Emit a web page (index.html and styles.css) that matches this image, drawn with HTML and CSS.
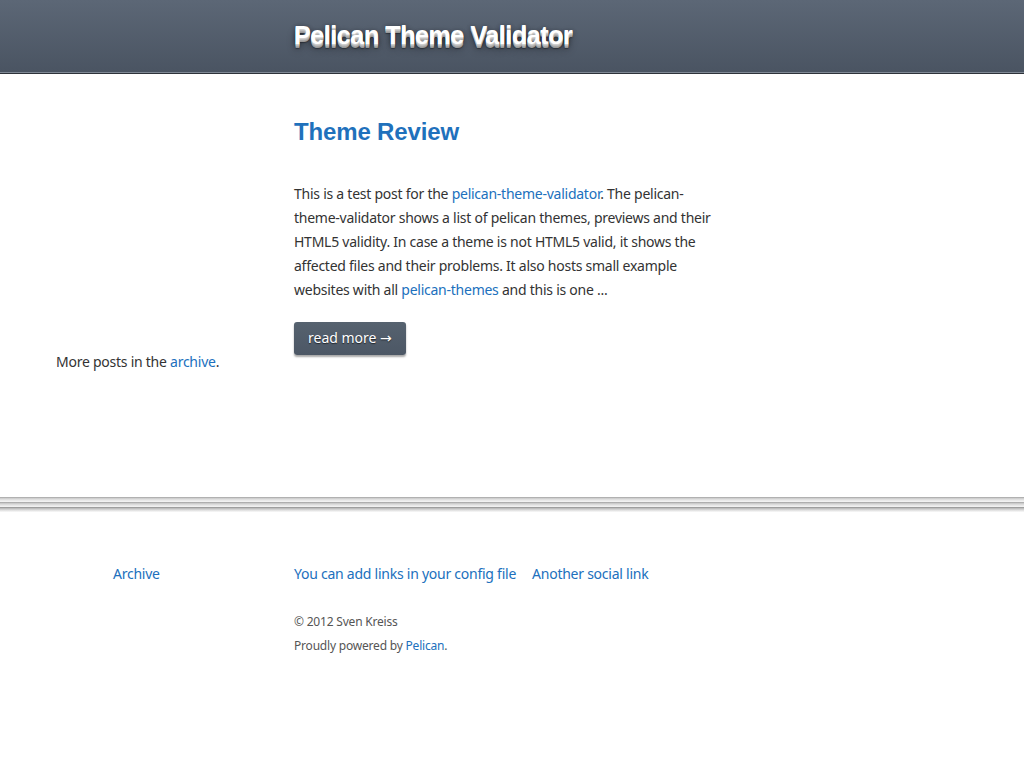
FILE: index.html
```html
<!DOCTYPE html>
<html lang="en">
<head>
<meta charset="utf-8">
<title>Pelican Theme Validator</title>
<link rel="stylesheet" href="styles.css">
</head>
<body>
<header class="site-header">
  <h1 class="site-title">Pelican Theme Validator</h1>
</header>
<main class="main">
  <div class="layout">
    <article class="post">
      <h2 class="post-title"><a href="#">Theme Review</a></h2>
      <p class="post-summary">This is a test post for the <a href="#">pelican-theme-validator</a>. The pelican-theme-validator shows a list of pelican themes, previews and their HTML5 validity. In case a theme is not HTML5 valid, it shows the affected files and their problems. It also hosts small example websites with all <a href="#">pelican-themes</a> and this is one ...</p>
      <a class="btn" href="#">read more →</a>
    </article>
    <p class="more-posts">More posts in the <a href="#">archive</a>.</p>
  </div>
</main>
<div class="separator"></div>
<footer class="site-footer">
  <div class="footer-row">
    <div class="footer-side"><a href="#">Archive</a></div>
    <div class="footer-main">
      <nav class="social"><a href="#">You can add links in your config file</a><a href="#">Another social link</a></nav>
      <p class="copy">© 2012 Sven Kreiss<br>Proudly powered by <a href="#">Pelican</a>.</p>
    </div>
  </div>
</footer>
</body>
</html>
```

FILE: styles.css
```css
html, body {
  margin: 0;
  padding: 0;
  background: #fff;
}
body {
  font-family: "Noto Sans", "DejaVu Sans", sans-serif;
  font-size: 14px;
  line-height: 24px;
  letter-spacing: -0.25px;
  color: #333;
}
a {
  color: #2070bd;
  text-decoration: none;
}
.site-header {
  height: 72px;
  background: linear-gradient(to bottom, #5c6776 0%, #4a5462 100%);
  border-bottom: 1px solid #7f8894;
  box-shadow: 0 1px 0 #2e333a;
  padding-left: 294px;
}
.site-title {
  margin: 0;
  font-family: "Liberation Sans", Arial, sans-serif;
  font-weight: bold;
  font-size: 25px;
  letter-spacing: -0.4px;
  line-height: 70px;
  color: #fff;
  text-shadow: 0 1px 0 #d0d0d0, 0 2px 0 #bdbdbd, 0 3px 0 #a8a8a8, 0 4px 0 #999, 0 5px 1px rgba(0,0,0,.3), 0 0 5px rgba(0,0,0,.2), 0 3px 5px rgba(0,0,0,.35), 0 6px 8px rgba(0,0,0,.3);
}
.main {
  padding-top: 44px;
  padding-bottom: 123px;
}
.layout {
  display: grid;
  grid-template-columns: 238px 419px;
  padding-left: 56px;
}
.post {
  grid-column: 2;
}
.post-title {
  margin: 0 0 35px;
  font-family: "Liberation Sans", Arial, sans-serif;
  font-weight: bold;
  font-size: 24px;
  letter-spacing: -0.15px;
  line-height: 30px;
}
.post-title a {
  color: #1f71bc;
}
.post-summary {
  margin: 0 0 20px;
}
.btn {
  display: inline-block;
  height: 33px;
  line-height: 32px;
  padding: 0 14px;
  box-sizing: border-box;
  letter-spacing: 0;
  background: linear-gradient(to bottom, #56626f, #4c5765);
  color: #fff;
  border-radius: 3px;
  text-shadow: 0 1px 1px rgba(0,0,0,.6);
  box-shadow: 0 2px 2px rgba(0,0,0,.35);
  vertical-align: top;
}
.more-posts {
  grid-column: 1;
  margin: -5px 0 0;
}
.separator {
  height: 15px;
  background:
    linear-gradient(to bottom, #9a9a9a 0, #c8c8c8 1px, #e6e6e6 3px, #f6f6f6 5px) 0 0 / 100% 5px no-repeat,
    linear-gradient(to bottom, #999 0, #c4c4c4 1px, #e4e4e4 3px, #f5f5f5 5px) 0 5px / 100% 5px no-repeat,
    linear-gradient(to bottom, #888 0, #b4b4b4 1px, #dcdcdc 3px, #fafafa 5px) 0 10px / 100% 5px no-repeat;
}
.site-footer {
  padding-top: 50px;
  padding-bottom: 100px;
}
.footer-row {
  display: grid;
  grid-template-columns: 181px 500px;
  padding-left: 113px;
}
.social {
  display: flex;
  gap: 16px;
}
.copy {
  margin: 24px 0 0;
  font-size: 12px;
  letter-spacing: -0.2px;
  line-height: 24px;
  color: #555;
}
```
